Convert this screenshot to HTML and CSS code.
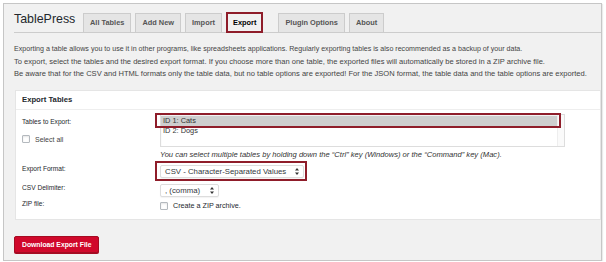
FILE: index.html
```html
<!doctype html>
<html lang="en">

<head>
    <meta charset="utf-8">
    <meta name="viewport" content="width=device-width, initial-scale=1">
    <title>TablePress - Export</title>
    <link rel="stylesheet" href="styles.css">
</head>

<body>
    <div class="wrap">
        <div class="nav">
            <h1 class="brand">TablePress</h1>
            <span class="tab tab-first">All Tables</span>
            <span class="tab">Add New</span>
            <span class="tab">Import</span>
            <span class="tab tab-active">Export</span>
            <span class="tab tab-gap">Plugin Options</span>
            <span class="tab">About</span>
        </div>

        <p class="intro">Exporting a table allows you to use it in other programs, like spreadsheets applications. Regularly exporting tables is also recommended as a backup of your data.</p>
        <p class="intro intro-2">To export, select the tables and the desired export format. If you choose more than one table, the exported files will automatically be stored in a ZIP archive file.<br>Be aware that for the CSV and HTML formats only the table data, but no table options are exported! For the JSON format, the table data and the table options are exported.</p>

        <div class="postbox">
            <div class="postbox-head">Export Tables</div>
            <div class="form">
                <div class="label-stack">
                    <div class="label">Tables to Export:</div>
                    <div class="select-all">
                        <span class="checkbox"></span>
                        <span>Select all</span>
                    </div>
                </div>
                <div>
                    <div class="listbox">
                        <div class="options">
                            <div class="option option-selected">ID 1: Cats</div>
                            <div class="option">ID 2: Dogs</div>
                        </div>
                        <div class="track"></div>
                        <span class="mark mark-option"></span>
                    </div>
                    <div class="help">You can select multiple tables by holding down the “Ctrl” key (Windows) or the “Command” key (Mac).</div>
                </div>

                <div class="label label-mid">Export Format:</div>
                <div>
                    <div class="select select-format">
                        <span>CSV - Character-Separated Values</span>
                        <svg class="arrows" width="4" height="7" viewBox="0 0 4 7"><path d="M2 0 L4 2.6 L0 2.6 Z M2 7 L4 4.4 L0 4.4 Z" fill="#333"/></svg>
                        <span class="mark mark-select"></span>
                    </div>
                </div>

                <div class="label label-mid">CSV Delimiter:</div>
                <div>
                    <div class="select select-delim">
                        <span>, (comma)</span>
                        <svg class="arrows" width="4" height="7" viewBox="0 0 4 7"><path d="M2 0 L4 2.6 L0 2.6 Z M2 7 L4 4.4 L0 4.4 Z" fill="#333"/></svg>
                    </div>
                </div>

                <div class="label label-mid">ZIP file:</div>
                <div class="zip">
                    <span class="checkbox"></span>
                    <span>Create a ZIP archive.</span>
                </div>
            </div>
        </div>

        <button type="button" class="button-primary">Download Export File</button>
    </div>
</body>

</html>
```

FILE: styles.css
```css
body {
    margin: 0;
    padding: 3px 4px 0 3px;
    background-color: white;
    font-family: "Liberation Sans", Arial, sans-serif;
    color: #444;
}

.wrap {
    border: 1px solid #c6c6c6;
    background-color: #f1f1f1;
    height: 256px;
    box-shadow: 1px 1px 1px rgba(0, 0, 0, 0.08);
}

/* tabs */
.nav {
    display: flex;
    align-items: flex-end;
    margin: 8px 0 0 10px;
    border-bottom: 1px solid #ccc;
}

.brand {
    align-self: flex-start;
    margin: 0 10px 0 0;
    width: 59px;
    font-size: 12.4px;
    font-weight: normal;
    line-height: 15px;
    white-space: nowrap;
    color: #23282d;
}

.tab {
    height: 18px;
    line-height: 18px;
    padding: 0 6px;
    margin-left: 4px;
    border: 1px solid #ccc;
    border-bottom: none;
    background-color: #e5e5e5;
    color: #555;
    font-size: 7.4px;
    font-weight: bold;
}

.tab-first {
    margin-left: 0;
}

.tab-active {
    height: 17px;
    line-height: 17px;
    margin-bottom: -1px;
    padding: 0 5px;
    border: 2px solid #8f1d2a;
    background-color: #f1f1f1;
    color: #000;
}

.tab-gap {
    margin-left: 15px;
}

/* intro text */
.intro {
    margin: 10px 0 1px 10px;
    font-size: 7.1px;
    line-height: 12px;
    white-space: nowrap;
}

.intro-2 {
    margin-top: 0;
    font-size: 7.55px;
}

/* export box */
.postbox {
    margin: 10px 0 0 11px;
    border: 1px solid #e5e5e5;
    background-color: white;
}

.postbox-head {
    height: 18px;
    line-height: 18px;
    padding-left: 6px;
    border-bottom: 1px solid #eee;
    font-size: 7.7px;
    font-weight: bold;
    color: #23282d;
}

.form {
    display: grid;
    grid-template-columns: 138px 1fr;
    padding: 0 0 9px 6px;
    font-size: 6.6px;
}

.label {
    color: #23282d;
    line-height: 10px;
}

.label-stack .label {
    margin-top: 7px;
}

.label-mid {
    align-self: center;
}

.select-all {
    display: flex;
    align-items: center;
    gap: 5px;
    margin-top: 8px;
    font-size: 7px;
}

.checkbox {
    display: inline-block;
    width: 6px;
    height: 6px;
    border: 1px solid #b4b9be;
    border-radius: 1px;
    background-color: white;
    box-shadow: inset 0 1px 2px rgba(0, 0, 0, 0.1);
}

.listbox {
    position: relative;
    display: flex;
    width: 403px;
    height: 31px;
    margin-top: 4px;
    border: 1px solid #ddd;
    box-shadow: inset 0 1px 2px rgba(0, 0, 0, 0.07);
    font-size: 7.4px;
}

.options {
    flex: 1;
    padding-top: 1px;
}

.option {
    height: 10px;
    line-height: 10px;
    padding-left: 2px;
    color: #333;
}

.option-selected {
    background-color: #cecece;
}

.track {
    width: 6px;
    border-left: 1px solid #eee;
    background-color: #fafafa;
}

.mark {
    position: absolute;
    border: 2px solid #8f1d2a;
    pointer-events: none;
}

.mark-option {
    left: -6px;
    right: 3px;
    top: -2px;
    height: 11px;
}

.help {
    margin-top: 3px;
    line-height: 10px;
    font-size: 7.6px;
    font-style: italic;
    color: #333;
}

.select {
    position: relative;
    display: flex;
    align-items: center;
    justify-content: space-between;
    height: 11px;
    line-height: 11px;
    padding: 0 4px;
    border: 1px solid #ddd;
    border-radius: 2px;
    background-color: white;
    box-shadow: 0 1px 1px rgba(0, 0, 0, 0.05);
    color: #32373c;
    font-size: 7.8px;
}

.select-format {
    width: 134px;
    margin-top: 5px;
}

.select-delim {
    width: 49px;
    margin-top: 6px;
}

.mark-select {
    left: -6px;
    right: -4px;
    top: -5px;
    bottom: -4px;
}

.zip {
    display: flex;
    align-items: center;
    gap: 5px;
    margin-top: 4px;
    color: #23282d;
    font-size: 7.2px;
}

.button-primary {
    display: block;
    height: 17px;
    margin: 16px 0 0 10px;
    padding: 0 7px;
    border: 1px solid #a50b22;
    border-radius: 2px;
    background-color: #d0082b;
    box-shadow: 0 1px 0 #a50b22;
    color: white;
    font-family: "Liberation Sans", Arial, sans-serif;
    font-size: 6.8px;
    font-weight: bold;
}
```
